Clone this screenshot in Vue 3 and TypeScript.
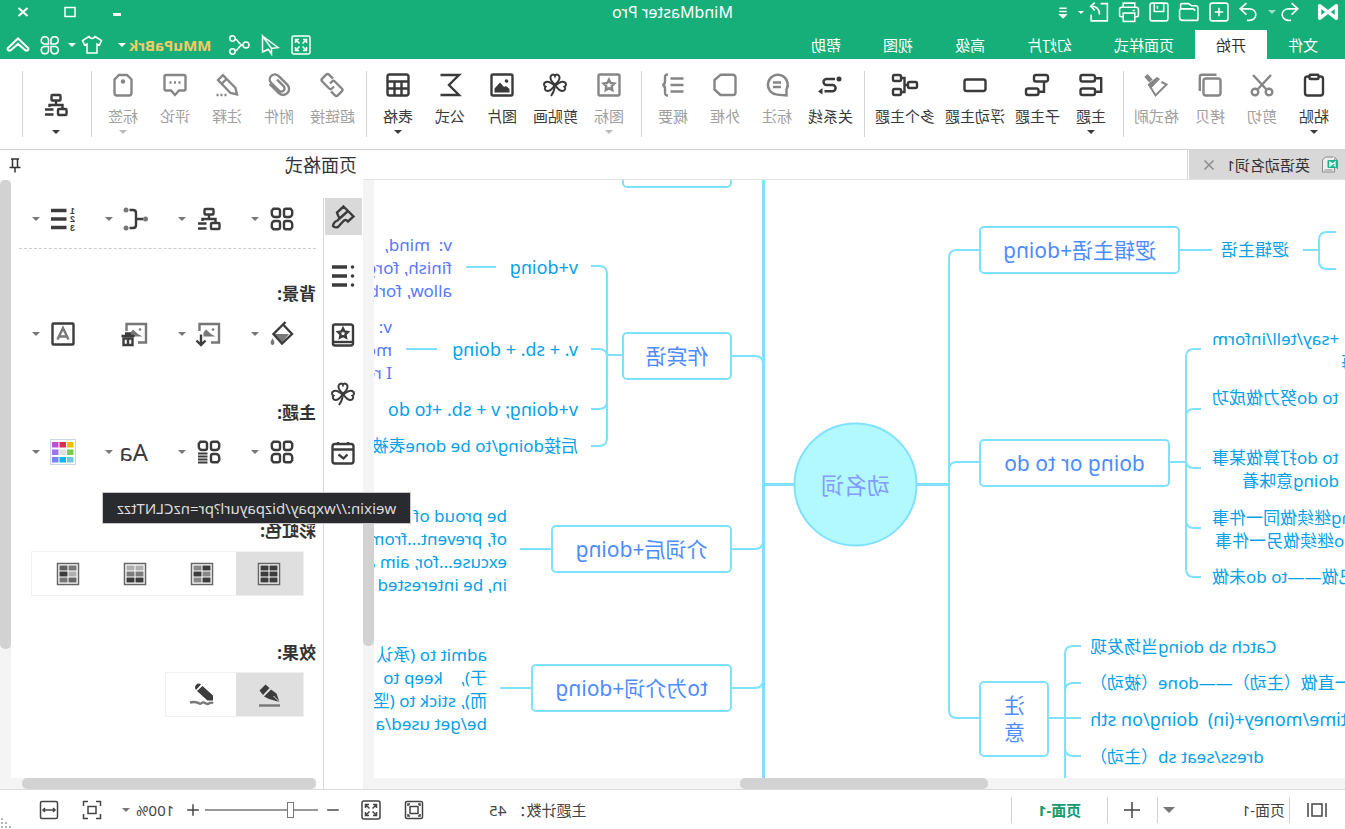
<script setup lang="ts">
import { ref } from 'vue'

interface Tool {
  icon: string
  label: string
  off?: boolean
  caret?: boolean
}

interface Topic {
  text: string[]
  y: number
  left?: number
  right?: number
  tone?: string
}

interface Box {
  text: string
  x: number
  y: number
  w: number
  h: number
  stacked?: boolean
}

const star = '<path d="M12 6.6l1.7 3.4 3.7.6-2.7 2.6.6 3.8-3.3-1.8-3.3 1.8.6-3.8-2.7-2.6 3.7-.6z"/>'
const clover =
  '<g stroke-width="2"><path d="M12 11.5C9 9 7 6.800 7.500 4 8 1.300 11 .8 12 3 13 .8 16 1.300 16.500 4 17 6.800 15 9 12 11.500z"/>' +
  '<path d="M11.500 12.500C8.500 9.800 5.500 8 2.900 9 .4 10 .4 12.800 2.500 13.700 .8 15.500 2.300 18.200 4.900 18 7.800 17.700 9.800 15.300 11.500 12.500z"/>' +
  '<path d="M12.500 12.500C15.500 9.800 18.500 8 21.100 9 23.600 10 23.600 12.800 21.500 13.700 23.200 15.500 21.700 18.200 19.100 18 16.200 17.700 14.200 15.300 12.500 12.500z"/>' +
  '<path d="M12 12.500c.5 4 1.600 7.500 4 10.500"/></g>'
const structure =
  '<rect x="7.500" y="2" width="9" height="5.500" rx="1"/><path d="M12 7.500V12M5.500 15.500V12H18.500V14"/>' +
  '<rect x="1.500" y="16" width="8.500" height="6" rx="1"/><path d="M14.500 16.500H23M14.500 21.500H23"/>'
const petals =
  '<path d="M3.500 1.800H8a2 2 0 0 1 2 2V8a2 2 0 0 1-2 2H5a3.200 3.200 0 0 1-3.200-3.200V3.800z"/>' +
  '<path d="M20.500 1.800H16a2 2 0 0 0-2 2V8a2 2 0 0 0 2 2h3a3.200 3.200 0 0 0 3.200-3.200V3.800z"/>' +
  '<path d="M3.500 22.200H8a2 2 0 0 0 2-2V16a2 2 0 0 0-2-2H5a3.200 3.200 0 0 0-3.200 3.200V20.200z"/>'
const picFrame =
  '<g stroke="#777"><path d="M10 20.500H2V2H21.500V9"/></g><circle cx="8" cy="7.500" r="1.300" fill="#777" stroke="none"/><path d="M5.500 14.500l4.500-2.500 5-4.500 2.500 3v4z" fill="#777" stroke="none"/>'
const shadeGrid = (c: string[]): string =>
  '<rect x="1.500" y="1.500" width="21" height="21" stroke="#666" stroke-width="1.500" fill="#fff"/>' +
  c
    .map(
      (f, i) =>
        `<rect x="${i % 2 ? 12.500 : 3.500}" y="${3.500 + Math.floor(i / 2) * 6}" width="8" height="5" fill="${f}" stroke="none"/>`,
    )
    .join('')

const icons: Record<string, string> = {
  logo: '<path d="M2.500 16.500V4.500L18.500 16.500V4.500z" stroke-width="3.200" stroke-linejoin="round"/>',
  undo: '<path d="M9 2L3 7.500l6 5.500M3.500 7.500h8.500a6 5.500 0 0 1 0 11H9.500"/>',
  redo: '<path d="M12 2l6 5.500-6 5.500M17.500 7.500H9a6 5.500 0 0 0 0 11h2.500"/>',
  create: '<rect x="2" y="2" width="17" height="17" rx="2"/><path d="M10.500 6.500v8M6.500 10.500h8"/>',
  open: '<path d="M2 18.500V6.500a2 2 0 0 1 2-2h4l3-2h6.500a1 1 0 0 1 1 1v3.500M2 18.500h14.500a3 3 0 0 0 3-3V9.500a2 2 0 0 0-2-2H7a2 2 0 0 0-2 2"/>',
  save: '<rect x="2" y="2" width="17" height="17" rx="2"/><path d="M6 2v8h9V2M12 4.500v3"/>',
  print: '<path d="M5 6V2h11v4M5 15H3a1.500 1.500 0 0 1-1.500-1.500V8A2 2 0 0 1 3.500 6h14a2 2 0 0 1 2 2v5.500A1.500 1.500 0 0 1 18 15h-2"/><rect x="5" y="11.500" width="11" height="8"/><path d="M5 9h2"/>',
  exportTo: '<path d="M9 2.500H2.500v16.500h15.500V13M10 13c0-4 2-8 8-8M14.500 1.500L18.500 5l-4 4"/>',
  more: '<path d="M7 7h7M7 10h7"/><path d="M6 12.500h9L10.500 17z" fill="currentColor" stroke="none"/>',
  full: '<rect x="2" y="2" width="18" height="18" rx="2"/><path d="M9 5.500H5.500V9M5.500 5.500L9.500 9.500M13 5.500h3.500V9M16.500 5.500l-4 4M9 16.500H5.500V13M5.500 16.500l4-4M13 16.500h3.500V13M16.500 16.500l-4-4"/>',
  plane: '<path d="M18.500 2L3 13.500l6.500 1L18.500 2v16l-6.500-3M9.500 14.500V20l3.500-5"/>',
  share: '<circle cx="4" cy="11" r="3"/><circle cx="17.500" cy="4.500" r="2.700"/><circle cx="17.500" cy="17.500" r="2.700"/><path d="M7 11c5 0 4-5 8-6M7 11c5 0 4 5 8 6"/>',
  shirt: '<path d="M8 2.500L1.500 6.500 3.500 11 6 10v9h10v-9l2.500 1 2-4.500L14 2.500c-1.500 2.500-4.500 2.500-6 0z"/>',
  petals4:
    '<path d="M10 10H5.500A3.700 3.700 0 1 1 10 5.500zM12.500 10H17a3.700 3.700 0 1 0-4.500-4.500zM10 12.500H5.500A3.700 3.700 0 1 0 10 17zM12.500 12.500H17a3.700 3.700 0 1 1-4.500 4.500z"/>',
  collapse: '<path d="M1.500 14L11 5l9.500 9q.5 2.500-2.500 2L11 10 4 16q-3 .5-2.500-2z" stroke-width="1.800"/>',
  paste: '<rect x="3" y="3.500" width="18" height="19" rx="2.500"/><rect x="7.500" y="1.800" width="9" height="4.200" rx="1" fill="#fff"/>',
  cut: '<circle cx="5" cy="19" r="3.300"/><circle cx="19" cy="19" r="3.300"/><path d="M3 2l13.500 14.500M21 2L7.500 16.500"/>',
  copy: '<rect x="1.500" y="5.500" width="17" height="17" rx="2.500"/><path d="M5.500 1.800H20a2.200 2.200 0 0 1 2.200 2.200V18"/>',
  brush: '<path d="M22 2.500L17 8" stroke-width="4.500"/><path d="M6.500 9L1.500 11.500 12.500 22.500 17 15" stroke-width="2"/><path d="M8.500 6l2.500-1.500L20 11.500l-2.500 4z" fill="currentColor" stroke-width="1"/>',
  topic: '<rect x="8" y="2" width="14.500" height="6.500" rx="2"/><rect x="8" y="15.500" width="14.500" height="6.500" rx="2"/><path d="M8 5.200H1.800V18.800H8"/>',
  subtopic: '<rect x="1" y="2" width="14" height="6.500" rx="2"/><rect x="10.500" y="15.500" width="12.500" height="6.500" rx="2"/><path d="M5 8.500V18.800H10"/>',
  floating: '<rect x="1.500" y="6.500" width="21" height="11.500" rx="2"/>',
  multi: '<rect x="16" y="2" width="8" height="6" rx="1.500"/><rect x="16" y="16" width="8" height="6" rx="1.500"/><rect x="0" y="9" width="9" height="6" rx="1.500"/><path d="M9 12h3.500M16 5h-3.500v14H16"/>',
  relation: '<circle cx="3" cy="6" r="2.500" fill="currentColor" stroke="none"/><path d="M7 6h8.500a3 3 0 0 1 0 6H9.500a3 3 0 0 0 0 6.200H17.500"/><path d="M19.500 15v6.500l4.500-3z" fill="currentColor" stroke="none"/>',
  callout: '<path d="M2.500 16.500A9.900 9.900 0 1 1 12 21.600L2.500 22.500z"/><path d="M8 9.500h8M8 14h8"/>',
  boundary: '<path d="M4 1.800H16.500L22.500 7V16.500L16.500 22H4a2.500 2.500 0 0 1-2.500-2.500V4.300A2.500 2.500 0 0 1 4 1.800z" stroke-linejoin="round"/>',
  summary: '<path d="M1.500 5.500h13M1.500 12h13M1.500 18.500h13"/><path d="M17 1.500c3 0 3 1 3 3v4c0 2 .5 3 2.500 3.500-2 .5-2.500 1.500-2.500 3.500v4c0 2 0 3-3 3"/>',
  mark: '<rect x="1.500" y="1.500" width="21" height="21" rx="1.500"/>' + star,
  clipart: clover,
  image: '<rect x="1.500" y="1.500" width="21" height="21" rx="1.500"/><circle cx="7.500" cy="8" r="1.800" fill="currentColor" stroke="none"/><path d="M4.500 19.500v-3.500l3.500-3 2 1 4-4.500 5.500 6v4z" fill="currentColor" stroke="none"/>',
  formula: '<path d="M21.500 2H3L13 12 3 22H21.500"/>',
  table: '<rect x="1.500" y="1.500" width="21" height="21" rx="2"/><path d="M2 8.500H22M2 15.500H22M8.500 8.500V22M15.500 8.500V22"/>',
  link: '<path d="M10 13.500l2 2a2 2 0 0 0 2.800 0l7-7a2 2 0 0 0 0-2.800l-4-4a2 2 0 0 0-2.800 0l-4 4M14 10.500l-2-2a2 2 0 0 0-2.800 0l-7 7a2 2 0 0 0 0 2.800l4 4a2 2 0 0 0 2.800 0l4-4"/>',
  attach: '<path d="M21.400 11l-9.200 9.200a6 6 0 0 1-8.500-8.500l8.600-8.500A5 5 0 0 1 20 9.900l-8 7.800a3.200 3.200 0 0 1-4.600-4.600l6.600-6.500"/>',
  note: '<path d="M2 21.500L3.500 15 16 2.200 21 7 8.500 20zM12.500 6l5 5"/><path d="M12.500 22h2M16.500 22h2M20.500 22h2"/>',
  comment: '<path d="M3 2H21a1.500 1.500 0 0 1 1.500 1.500V16A1.500 1.500 0 0 1 21 17.500h-5L12 22 8 17.500H3A1.500 1.500 0 0 1 1.500 16V3.500A1.500 1.500 0 0 1 3 2z"/><path d="M6.500 9.500h2M11 9.500h2M15.500 9.500h2"/>',
  tag: '<path d="M8 2h8l4.500 4.500V20A2.500 2.500 0 0 1 18 22.500H6A2.500 2.500 0 0 1 3.500 20V6.500z"/><circle cx="12" cy="8.500" r="2.200" fill="currentColor"  stroke="none"/>',
  structure,
  layout: petals + '<path d="M20.500 22.200H16a2 2 0 0 1-2-2V16a2 2 0 0 1 2-2h3a3.200 3.200 0 0 1 3.200 3.200V20.200z"/>',
  themeList: petals + '<path d="M13.500 13.500H23M13.500 16.500H23M13.500 19.500H23M13.500 22.500H23" stroke-width="1.800"/>',
  branch: '<circle cx="2.500" cy="12" r="2.500" fill="#777" stroke="none"/><circle cx="22" cy="3" r="2.500" fill="#777" stroke="none"/><circle cx="22" cy="21" r="2.500" fill="#777" stroke="none"/><path d="M5 12h7M18.500 3h-3.500q-3 0-3 3v12q0 3 3 3h3.500"/>',
  numbering: '<path d="M8.500 3.500H24M8.500 12H24M8.500 20.500H24" stroke-width="3.500"/><g fill="currentColor" stroke="none" font-family="Liberation Sans, sans-serif" font-weight="bold" font-size="9"><text x="0" y="6.500">1</text><text x="0" y="15">2</text><text x="0" y="24">3</text></g>',
  fill: '<path d="M5 12h15l-8 8.500z" fill="#777" stroke="none"/><path d="M8.500 0L20.500 12 12 21.500 2 12 11 2.500"/><path d="M21.500 16.500c4 5 .5 6.500 0 6.500s-4-1.500 0-6.500z" fill="#777" stroke="none"/>',
  bgPick: picFrame + '<path d="M20 12.500v10M15.500 18.500l4.500 4.500 4.500-4.500"/>',
  bgClear: picFrame + '<path d="M13.500 14h13M17 11.500h6"/><path d="M15.500 16.500h9v6.500h-9z"/><path d="M20 16v7"/>',
  watermark: '<rect x="1.500" y="1.500" width="21" height="21" rx="1"/><path d="M6.500 17.500L12 6l5.500 11.500M8.500 14.500h7" stroke="#777"/>',
  palette:
    '<rect x="-.5" y="-.5" width="25" height="25" fill="#fff" stroke="#ccd4ea" stroke-width="1"/>' +
    ['#f0c000', '#dd2c50', '#c24fcb', '#75d043', '#ddd', '#9b75ee', '#68cbe0', '#00b5f2', '#7583ff']
      .map((c, i) => `<rect x="${1.500 + (i % 3) * 7.500}" y="${2 + Math.floor(i / 3) * 7.500}" width="6.500" height="5.500" fill="${c}" stroke="none"/>`)
      .join(''),
  style: '<path d="M11.500 1.500L1.500 11.500 7 16.500Q9.500 13.500 12 16.500L17 22q3.500 1 5-1-.5-4-4.500-5.500-3-2-.5-5L18 7.500z"/><path d="M7 6l9 8"/>',
  outline: '<path d="M8 3H23M8 12H23M8 21H23" stroke-width="3.500"/><circle cx="2.500" cy="3" r="1.800" fill="currentColor" stroke="none"/><circle cx="2.500" cy="12" r="1.800" fill="currentColor" stroke="none"/><circle cx="2.500" cy="21" r="1.800" fill="currentColor" stroke="none"/>',
  book: '<rect x="2" y="1.500" width="20" height="21" rx="2"/><path d="M2 19H22"/><path d="M12 5.500l1.500 3 3.300.5-2.400 2.300.6 3.300-3-1.600-3 1.600.6-3.300L7.200 9l3.300-.5z"/>',
  calendar: '<rect x="1.500" y="3" width="21" height="19.500" rx="2.500"/><path d="M2 8.500H22M7 1v3M17 1v3M7.500 13.500l4 4 5-4"/>',
  rainbow1: shadeGrid(['#3c3c3c', '#3c3c3c', '#3c3c3c', '#3c3c3c', '#3c3c3c', '#3c3c3c']),
  rainbow2: shadeGrid(['#3c3c3c', '#888', '#888', '#3c3c3c', '#3c3c3c', '#888']),
  rainbow3: shadeGrid(['#b0b0b0', '#b0b0b0', '#7c7c7c', '#7c7c7c', '#3c3c3c', '#3c3c3c']),
  rainbow4: shadeGrid(['#777', '#606060', '#b0b0b0', '#3c3c3c', '#666', '#777']),
  pen: '<path d="M1 22.500H22" stroke="#777"/><path d="M1.500 19L4.500 10.500 10 6.500l7 7L12 16z M11.500 5L15.500 1.500 21.500 7.500 18 12z" fill="currentColor" stroke="none"/><path d="M1.500 19L7.500 13" stroke="#ddd" stroke-width="1"/>',
  pencil: '<path d="M1 20.500c3-3 4 2 7 0s3.500-1 5 0 2-.5 4-1 3-1 7 0" stroke="#777"/><path d="M1 17.500V12.500L11.500 3l5.500 5L6.500 17.500zM13 1.500q2.500-2 5 .5 2 2.500 0 5z" fill="currentColor" stroke="none"/>',
  pin: '<path d="M6 4h8M7.500 4v8M12.500 4v8M4.500 12.500h11M10 12v5.500"/>',
  pages: '<rect x="6" y="4" width="10" height="12"/><path d="M2 3v14M20 3v14"/>',
  plus: '<path d="M11 3v16M3 11h16"/>',
  minus: '<path d="M3 11h16"/>',
  fitPage: '<rect x="2.500" y="2.500" width="17" height="17" rx="1.500"/><rect x="7" y="7.500" width="8" height="7"/><path d="M5 7V5h2M15 5h2v2M5 15v2h2M15 17h2v-2"/>',
  fitSel: '<path d="M2.500 7V2.500H7M15 2.500h4.500V7M2.500 15v4.500H7M15 19.500h4.500V15"/><rect x="7" y="7.500" width="8" height="7"/>',
  fitWidth: '<rect x="2.500" y="2.500" width="17" height="17" rx="1.500"/><path d="M5.500 11h11M7 9l-2 2 2 2M15 9l2 2-2 2"/>',
}

const quick: [string, string][] = [
  ['create', '新建'],
  ['open', '打开'],
  ['save', '保存'],
  ['print', '打印'],
  ['exportTo', '导出'],
]

const menu: string[] = ['文件', '开始', '页面样式', '幻灯片', '高级', '视图', '帮助']
const activeMenu = ref('开始')

const groups: Tool[][] = [
  [
    { icon: 'paste', label: '粘贴', caret: true },
    { icon: 'cut', label: '剪切', off: true },
    { icon: 'copy', label: '拷贝', off: true },
    { icon: 'brush', label: '格式刷', off: true },
  ],
  [
    { icon: 'topic', label: '主题', caret: true },
    { icon: 'subtopic', label: '子主题' },
    { icon: 'floating', label: '浮动主题' },
    { icon: 'multi', label: '多个主题' },
  ],
  [
    { icon: 'relation', label: '关系线' },
    { icon: 'callout', label: '标注', off: true },
    { icon: 'boundary', label: '外框', off: true },
    { icon: 'summary', label: '概要', off: true },
  ],
  [
    { icon: 'mark', label: '图标', off: true, caret: true },
    { icon: 'clipart', label: '剪贴画' },
    { icon: 'image', label: '图片' },
    { icon: 'formula', label: '公式' },
    { icon: 'table', label: '表格', caret: true },
  ],
  [
    { icon: 'link', label: '超链接', off: true },
    { icon: 'attach', label: '附件', off: true },
    { icon: 'note', label: '注释', off: true },
    { icon: 'comment', label: '评论', off: true },
    { icon: 'tag', label: '标签', off: true, caret: true },
  ],
]

const boxes: Box[] = [
  { text: '逻辑主语+doing', x: 165, y: 46, w: 201, h: 48 },
  { text: 'doing or to do', x: 175, y: 259, w: 191, h: 48 },
  { text: '注意', x: 296, y: 501, w: 70, h: 76, stacked: true },
  { text: '', x: 613, y: -40, w: 110, h: 48 },
  { text: '作宾语', x: 613, y: 152, w: 110, h: 48 },
  { text: '介词后+doing', x: 613, y: 345, w: 181, h: 48 },
  { text: 'to为介词+doing', x: 613, y: 484, w: 201, h: 48 },
]

// y is the middle of the text block; left-hand topics are anchored by their right edge
const topics: Topic[] = [
  { text: ['逻辑主语'], y: 70, right: 124 },
  { text: ['+say/tell/inform'], y: 159, right: 133 },
  { text: ['每'], y: 182, right: 4 },
  { text: ['to do努力做成功'], y: 218, right: 133 },
  { text: ['to do打算做某事'], y: 278, right: 133 },
  { text: ['doing意味着'], y: 301, right: 103 },
  { text: ['doing继续做同一件事'], y: 338, right: 133 },
  { text: ['to do继续做另一件事'], y: 361, right: 130 },
  { text: ['已做——to do未做'], y: 397, right: 133 },
  { text: ['Catch sb doing当场发现'], y: 467, right: 255 },
  { text: ['一直做（主动）——done（被动）'], y: 503, right: 255 },
  { text: ['time/money+(in)  doing/on sth'], y: 540, right: 255, tone: 'large' },
  { text: ['dress/seat sb（主动）'], y: 577, right: 255 },
  { text: ['v+doing'], y: 88, left: 767, tone: 'large' },
  { text: ['v. + sb. + doing'], y: 170, left: 767, tone: 'large' },
  { text: ['v+doing; v + sb. +to do'], y: 230, left: 767, tone: 'large' },
  { text: ['后接doing/to be done表被动'], y: 266, left: 767 },
  { text: ['v:  mind,', 'finish, forget', 'allow, forbid'], y: 88, left: 893, tone: 'deep' },
  { text: ['v:', 'mean', 'I regret'], y: 170, left: 953, tone: 'deep' },
  { text: ['be proud of', 'of, prevent...from', 'excuse...for, aim at', 'in, be interested'], y: 370, left: 838 },
  { text: ['admit to (承认', '于),    keep to', '而), stick to (坚', 'be/get used/a'], y: 509, left: 858 },
]

const topicStyle = (t: Topic): Record<string, string> => ({
  top: `${Math.floor(t.y - (t.text.length * 23) / 2)}px`,
  ...(t.left !== undefined ? { left: `${t.left}px` } : { left: `${(t.right ?? 0) - 400}px`, width: '400px', textAlign: 'right' }),
})

const links: string[] = [
  'M366 70H388Q396 70 396 78V530Q396 538 388 538H366M366 282H388Q396 282 396 290',
  'M165 70H133M42 70H26M9 52H18Q26 52 26 60V81Q26 89 18 89H9',
  'M175 282H159M144 169H151Q159 169 159 177V389Q159 397 151 397H144M144 229H151Q159 229 159 237M144 288H151Q159 288 159 280M144 348H151Q159 348 159 340',
  'M296 538H264M264 466H272Q280 466 280 474V598M264 503H272Q280 503 280 511M264 576H272Q280 576 280 568',
  'M613 176H590Q582 176 582 184M613 369H590Q582 369 582 361M613 508H590Q582 508 582 500',
  'M723 175H738M754 86H746Q738 86 738 94V258Q738 266 746 266H754M754 169H746Q738 169 738 177M754 229H746Q738 229 738 221',
  'M849 87H879M908 169H939M794 369H825M814 508H845',
]

const sideTabs: [string, string][] = [
  ['style', '页面格式'],
  ['outline', '大纲'],
  ['book', '图标库'],
  ['clipart', '剪贴画'],
  ['calendar', '任务'],
]

const rainbow = ref(0)
const effect = ref(0)
const zoom = ref(23)
</script>

<template>
  <div class="app">
    <header class="head">
      <div class="title-row">
        <svg class="i22 logo" viewBox="0 0 21 21" v-html="icons.logo"></svg>
        <button class="qb undo" aria-label="撤销"><svg class="i22" viewBox="0 0 21 21" v-html="icons.undo"></svg></button>
        <i class="caret dim"></i>
        <button class="qb redo" aria-label="重做"><svg class="i22" viewBox="0 0 21 21" v-html="icons.redo"></svg></button>
        <button v-for="q in quick" :key="q[0]" class="qb" :aria-label="q[1]">
          <svg class="i22" viewBox="0 0 21 21" v-html="icons[q[0]]"></svg>
        </button>
        <i class="caret after"></i>
        <button class="qb more" aria-label="更多"><svg class="i22" viewBox="0 0 21 21" v-html="icons.more"></svg></button>
        <h1>MindMaster Pro</h1>
        <div class="win">
          <button aria-label="最小化"><svg viewBox="0 0 12 12"><path d="M2 8.500h8" stroke-width="3" /></svg></button>
          <button aria-label="最大化"><svg viewBox="0 0 12 12"><path d="M1 1.500h10v9H1z" stroke-width="1.500" /></svg></button>
          <button aria-label="关闭"><svg viewBox="0 0 12 12"><path d="M1.500 2l9 8M10.500 2l-9 8" stroke-width="2" /></svg></button>
        </div>
      </div>
      <div class="menu-row">
        <nav class="menu">
          <button v-for="m in menu" :key="m" :class="{ on: m === activeMenu }" @click="activeMenu = m">{{ m }}</button>
        </nav>
        <div class="account">
          <button class="ab" aria-label="全屏"><svg class="i22" viewBox="0 0 22 22" v-html="icons.full"></svg></button>
          <button class="ab" aria-label="发送"><svg class="i22" viewBox="0 0 22 22" v-html="icons.plane"></svg></button>
          <button class="ab" aria-label="分享"><svg class="i22" viewBox="0 0 22 22" v-html="icons.share"></svg></button>
          <button class="user">MMuPaBrk<i class="caret"></i></button>
          <button class="ab skin" aria-label="皮肤"><svg class="i22" viewBox="0 0 22 22" v-html="icons.shirt"></svg><i class="caret"></i></button>
          <button class="ab" aria-label="应用"><svg class="i22" viewBox="0 0 22 22" v-html="icons.petals4"></svg></button>
          <button class="ab" aria-label="收起"><svg class="i24" viewBox="0 0 22 22" v-html="icons.collapse"></svg></button>
        </div>
      </div>
    </header>

    <div class="ribbon">
      <div v-for="(g, gi) in groups" :key="gi" class="group">
        <button v-for="t in g" :key="t.label" class="tool" :class="[{ off: t.off }, 'n' + t.label.length]" :disabled="t.off">
          <svg class="i24" viewBox="0 0 24 24" v-html="icons[t.icon]"></svg>
          <span>{{ t.label }}</span>
          <i v-if="t.caret" class="caret"></i>
        </button>
      </div>
      <div class="group">
        <button class="tool lone" aria-label="布局">
          <svg class="i24" viewBox="0 0 24 24" v-html="icons.structure"></svg>
          <i class="caret"></i>
        </button>
      </div>
    </div>

    <main class="work">
      <section class="doc">
        <div class="doc-tabs">
          <div class="doc-tab">
            <svg class="doc-icon" viewBox="0 0 17 18">
              <path d="M5 1H13L16 4V16H4V3" fill="#eee" stroke="#888" />
              <path d="M1 13V4.500L4 1M6 14h8" fill="none" stroke="#888" />
              <rect x="1" y="4" width="10" height="8" rx="1" fill="#14b889" stroke="none" />
              <path d="M3.500 10V6L8.500 10V6z" fill="none" stroke="#fff" stroke-width="1.300" />
            </svg>
            <span>英语动名词1</span>
            <button aria-label="关闭文档"><svg viewBox="0 0 12 12"><path d="M1.500 1.500l9 9M10.500 1.500l-9 9" /></svg></button>
          </div>
        </div>
        <div class="view">
          <div class="canvas">
            <svg class="wires" width="971" height="598" viewBox="0 0 971 598">
              <path v-for="(d, i) in links" :key="i" :d="d" />
              <path class="thick" d="M396 304.500H428M551 304.500H582M581.500 0V598" />
              <circle cx="489.500" cy="304.500" r="61" />
            </svg>
            <div class="root-topic">动名词</div>
            <div
              v-for="(b, i) in boxes"
              :key="i"
              class="box"
              :class="{ stacked: b.stacked }"
              :style="{ left: b.x + 'px', top: b.y + 'px', width: b.w + 'px', height: b.h + 'px' }"
            >
              {{ b.text }}
            </div>
            <div v-for="(t, i) in topics" :key="'t' + i" class="topic" :class="t.tone" :style="topicStyle(t)">
              <div v-for="(l, j) in t.text" :key="j">{{ l }}</div>
            </div>
          </div>
          <div class="bar v"><div class="space"></div><div class="thumb"></div><div class="rest"></div></div>
        </div>
        <div class="bar h"><div class="thumb"></div></div>
      </section>

      <aside class="panel">
        <div class="panel-title">
          <h2>页面格式</h2>
          <button aria-label="固定"><svg viewBox="0 0 20 20" v-html="icons.pin"></svg></button>
        </div>
        <div class="panel-body">
          <div class="side">
            <button v-for="(s, i) in sideTabs" :key="s[0]" :class="{ on: i === 0 }" :aria-label="s[1]">
              <svg class="i24" viewBox="0 0 24 24" v-html="icons[s[0]]"></svg>
            </button>
          </div>
          <div class="sheet">
            <div class="form">
              <div class="row first">
                <button aria-label="布局"><svg class="i24" viewBox="0 0 24 24" v-html="icons.layout"></svg><i class="caret"></i></button>
                <button aria-label="结构"><svg class="i24" viewBox="0 0 24 24" v-html="icons.structure"></svg><i class="caret"></i></button>
                <button aria-label="连线"><svg class="i24" viewBox="0 0 24 24" v-html="icons.branch"></svg><i class="caret"></i></button>
                <button aria-label="编号"><svg class="i24" viewBox="0 0 24 24" v-html="icons.numbering"></svg><i class="caret"></i></button>
              </div>
              <h3 class="bg-head">背景:</h3>
              <div class="row">
                <button aria-label="填充"><svg class="i24" viewBox="0 0 24 24" v-html="icons.fill"></svg><i class="caret"></i></button>
                <button aria-label="背景图片"><svg class="i24" viewBox="0 0 24 24" v-html="icons.bgPick"></svg><i class="caret"></i></button>
                <button aria-label="删除背景"><svg class="i24" viewBox="0 0 24 24" v-html="icons.bgClear"></svg></button>
                <button aria-label="水印"><svg class="i24" viewBox="0 0 24 24" v-html="icons.watermark"></svg><i class="caret"></i></button>
              </div>
              <h3>主题:</h3>
              <div class="row">
                <button aria-label="主题样式"><svg class="i24" viewBox="0 0 24 24" v-html="icons.layout"></svg><i class="caret"></i></button>
                <button aria-label="主题列表"><svg class="i24" viewBox="0 0 24 24" v-html="icons.themeList"></svg><i class="caret"></i></button>
                <button class="aa">Aa<i class="caret"></i></button>
                <button aria-label="颜色"><svg class="i24" viewBox="0 0 24 24" v-html="icons.palette"></svg><i class="caret"></i></button>
              </div>
              <h3>彩虹色:</h3>
              <div class="seg">
                <button v-for="n in 4" :key="n" :class="{ on: rainbow === n - 1 }" :aria-label="'彩虹色' + n" @click="rainbow = n - 1">
                  <svg class="i24" viewBox="0 0 24 24" v-html="icons['rainbow' + n]"></svg>
                </button>
              </div>
              <h3 class="fx-head">效果:</h3>
              <div class="seg">
                <button :class="{ on: effect === 0 }" aria-label="直线" @click="effect = 0"><svg class="i24" viewBox="0 0 24 24" v-html="icons.pen"></svg></button>
                <button :class="{ on: effect === 1 }" aria-label="手绘" @click="effect = 1"><svg class="i24" viewBox="0 0 24 24" v-html="icons.pencil"></svg></button>
              </div>
            </div>
            <div class="bar h"><div class="thumb"></div></div>
          </div>
          <div class="bar v"><div class="thumb"></div></div>
        </div>
        <div class="tip" role="tooltip">weixin://wxpay/bizpayurl?pr=nzCLNTtzz</div>
      </aside>
    </main>

    <footer class="status">
      <button class="pages" aria-label="页面列表"><svg class="i22" viewBox="0 0 22 20" v-html="icons.pages"></svg></button>
      <div class="picker">
        <select aria-label="页面"><option>页面-1</option></select>
        <i class="caret big"></i>
      </div>
      <button class="add" aria-label="添加页面"><svg class="i22" viewBox="0 0 22 22" v-html="icons.plus"></svg></button>
      <button class="page">页面-1</button>
      <div class="count">主题计数：<span>45</span></div>
      <div class="zoom">
        <button class="zi" aria-label="适应页面"><svg class="i22" viewBox="0 0 22 22" v-html="icons.fitPage"></svg></button>
        <button class="zi" aria-label="全屏显示"><svg class="i22" viewBox="0 0 22 22" v-html="icons.full"></svg></button>
        <button class="step out" aria-label="缩小"><svg viewBox="0 0 22 22" v-html="icons.minus"></svg></button>
        <input v-model="zoom" type="range" min="0" max="100" aria-label="缩放" />
        <button class="step" aria-label="放大"><svg viewBox="0 0 22 22" v-html="icons.plus"></svg></button>
        <button class="pct">100%<i class="caret"></i></button>
        <button class="zi" aria-label="适应选择"><svg class="i22" viewBox="0 0 22 22" v-html="icons.fitSel"></svg></button>
        <button class="zi" aria-label="适应宽度"><svg class="i22" viewBox="0 0 22 22" v-html="icons.fitWidth"></svg></button>
      </div>
      <svg class="grip" viewBox="0 0 12 12"><path d="M10 1v2M10 5v2M6 5v2M10 9v2M6 9v2M2 9v2" /></svg>
    </footer>
  </div>
</template>

<style>
body {
  margin: 0;
  overflow: hidden;
}
</style>

<style scoped>
/* The whole interface is shown as a mirror image. */
.app {
  transform: scaleX(-1);
  display: flex;
  flex-direction: column;
  height: 100vh;
  background: #fff;
  color: #333;
  font-family: 'Noto Sans', 'Noto Sans CJK SC', sans-serif;
  font-size: 15px;
  line-height: 20px;
}
.app *,
.app *::before {
  box-sizing: border-box;
}
button,
select {
  border: 0;
  padding: 0;
  margin: 0;
  background: none;
  color: inherit;
  font: inherit;
  display: flex;
  align-items: center;
  justify-content: center;
}
h1,
h2,
h3 {
  margin: 0;
}
svg {
  display: block;
  flex: none;
  overflow: visible;
  fill: none;
  stroke: currentColor;
  stroke-width: 2;
}
.i22 {
  width: 22px;
  height: 22px;
  stroke-width: 1.5;
}
.i24 {
  width: 24px;
  height: 24px;
  stroke-width: 2.4;
}
.caret {
  flex: none;
  width: 0;
  height: 0;
  border: 4px solid transparent;
  border-top-color: currentColor;
  border-bottom: 0;
}

.head {
  background: #16ae79;
  color: #fff;
}
.title-row {
  position: relative;
  display: flex;
  align-items: center;
  height: 24px;
  padding-left: 6px;
}
.logo {
  margin-right: 16px;
}
.qb {
  width: 30px;
  height: 22px;
}
.qb.undo,
.qb.redo {
  width: 22px;
}
.qb.redo {
  margin: 0 3px 0 9px;
}
.caret.dim {
  margin-left: 3px;
  opacity: 0.6;
}
.caret.after {
  border-width: 3px;
  border-bottom: 0;
}
.qb.more {
  margin-left: 4px;
  width: 22px;
}
h1 {
  position: absolute;
  left: 0;
  right: 0;
  text-align: center;
  pointer-events: none;
  font-size: 16px;
  font-weight: 400;
}
.win {
  display: flex;
  margin-left: auto;
}
.win button {
  width: 47px;
}
.win svg {
  width: 12px;
  height: 12px;
}
.menu-row {
  display: flex;
  justify-content: space-between;
  padding: 6px 6px 0;
}
.menu {
  display: flex;
}
.menu button {
  height: 29px;
  padding: 0 21px;
}
.menu .on {
  background: #fff;
  color: #333;
}
.account {
  display: flex;
  align-items: center;
  height: 29px;
  gap: 9px;
}
.user {
  gap: 3px;
  color: #f7ca64;
  font-weight: 700;
  margin: 0 6px 0 8px;
}
.user .caret,
.skin .caret {
  border-top-color: #fff;
}
.skin {
  gap: 5px;
  margin-right: -2px;
}

.ribbon {
  display: flex;
  height: 91px;
  padding: 12px 0 12px 5px;
  border-bottom: 1px solid #d0d0d0;
}
.group {
  display: flex;
}
.group::after {
  content: '';
  width: 1px;
  margin: 0 6px 0 5px;
  background: #d4d4d4;
}
.tool {
  width: 52px;
  flex-direction: column;
  justify-content: flex-start;
  padding-top: 2px;
  color: #3a3a3a;
  white-space: nowrap;
}
.tool span {
  margin-top: 9px;
  height: 20px;
}
.tool .caret {
  margin-top: 4px;
}
.tool.n3 {
  width: 55px;
}
.tool.n4 {
  width: 70px;
}
.tool.off {
  color: #868686;
}
.off span {
  color: #a0a0a0;
}
.off .caret {
  border-top-color: #bbb;
}
.tool.lone {
  width: 57px;
  padding-top: 22px;
}
.lone .caret {
  margin-top: 13px;
}

.work {
  flex: 1;
  display: flex;
  min-height: 0;
}
.doc {
  flex: 1;
  display: flex;
  flex-direction: column;
  min-width: 0;
}
.doc-tabs {
  display: flex;
  height: 30px;
  border-bottom: 1px solid #e2e2e2;
}
.doc-tab {
  display: flex;
  align-items: center;
  gap: 11px;
  width: 158px;
  padding-left: 6px;
  background: linear-gradient(#d8d8d8, #d8d8d8) no-repeat 0 0 / 156px 100%;
  border-right: 1px solid #d8d8d8;
}
.doc-icon {
  width: 18px;
  height: 18px;
  stroke-width: 1;
}
.doc-tab button {
  color: #8c8c8c;
}
.doc-tab button svg {
  width: 12px;
  height: 12px;
  stroke-width: 1.5;
}
.view {
  flex: 1;
  display: flex;
  min-height: 0;
}
.canvas {
  position: relative;
  flex: 1;
  overflow: hidden;
}
.wires {
  position: absolute;
  left: 0;
  top: 0;
  stroke: #80e1ff;
}
.wires .thick {
  stroke-width: 3;
}
.wires circle {
  fill: #b2f8ff;
}
.root-topic {
  position: absolute;
  left: 428px;
  top: 287px;
  width: 123px;
  text-align: center;
  font-size: 23px;
  line-height: 36px;
  color: #859cff;
}
.box {
  position: absolute;
  display: flex;
  align-items: center;
  justify-content: center;
  border: 2px solid #80e1ff;
  border-radius: 5px;
  background: #fff;
  color: #4d8cff;
  font-size: 21px;
  line-height: 27px;
  white-space: nowrap;
}
.box.stacked {
  padding: 0 22px;
  white-space: normal;
}
.topic {
  position: absolute;
  white-space: pre;
  font-size: 17px;
  line-height: 23px;
  color: #05a1e8;
}
.topic.large {
  font-size: 18px;
}
.topic.deep {
  color: #5878ff;
}
.bar {
  flex: none;
  display: flex;
  background: #f4f4f4;
}
.bar.h {
  height: 11px;
}
.bar.v {
  width: 11px;
  flex-direction: column;
}
.thumb {
  border-radius: 5px;
  background: #d2d2d2;
}
.doc .h .thumb {
  width: 248px;
  margin-left: 357px;
}
.doc .v .space {
  flex: 320;
}
.doc .v .thumb {
  flex: 146;
}
.doc .v .rest {
  flex: 132;
}

.panel {
  position: relative;
  width: 363px;
  display: flex;
  flex-direction: column;
}
.panel-title {
  display: flex;
  align-items: center;
  justify-content: space-between;
  height: 30px;
  padding: 0 5px 0 6px;
}
.panel-title svg {
  width: 20px;
  height: 20px;
  stroke-width: 1.5;
}
h2 {
  font-size: 18px;
  font-weight: 400;
}
.panel-body {
  flex: 1;
  display: flex;
  min-height: 0;
}
.side {
  display: flex;
  flex-direction: column;
  gap: 22px;
  width: 40px;
  margin-top: 18px;
  padding-left: 1px;
  border-right: 1px solid #d8d8d8;
}
.side button {
  width: 37px;
  height: 37px;
  color: #3c3c3c;
}
.side .on {
  background: #d9d9d9;
}
.sheet {
  flex: 1;
  display: flex;
  flex-direction: column;
  min-width: 0;
}
.form {
  flex: 1;
  padding: 20px 8px 0 7px;
}
.sheet .h {
  margin-left: 7px;
}
.sheet .h .thumb {
  width: 294px;
}
.panel-body > .v .thumb {
  height: 469px;
}
.row {
  display: grid;
  grid-template-columns: repeat(4, 73px);
  padding-left: 22px;
  height: 38px;
}
.row button {
  justify-content: flex-start;
  gap: 11px;
  color: #3c3c3c;
}
.row .caret {
  border-top-color: #777;
}
.row.first {
  height: 49px;
  padding-bottom: 11px;
  border-bottom: 1px dashed #ccc;
}
.row .aa {
  font-size: 24px;
  gap: 6px;
}
h3 {
  font-size: 17px;
  line-height: 24px;
  padding-top: 48px;
  height: 80px;
}
.bg-head {
  padding-top: 33px;
  height: 66px;
}
.fx-head {
  padding-top: 45px;
  height: 76px;
}
.seg {
  display: flex;
  width: fit-content;
  margin-left: 12px;
  padding-right: 3px;
  border: 1px solid #f0f0f0;
}
.seg button {
  width: 67px;
  height: 43px;
  color: #3c3c3c;
}
.seg .on {
  background: #dfdfdf;
}
.tip {
  position: absolute;
  right: 102px;
  top: 342px;
  padding: 5px 14px;
  border: 1px solid #c8c8c8;
  background: #2a2b2f;
  color: #ddd;
  white-space: nowrap;
}

.status {
  display: flex;
  align-items: center;
  height: 40px;
  border-top: 1px solid #dcdcdc;
  color: #444;
}
.status button,
.picker {
  height: 26px;
}
.status .pages {
  width: 56px;
  border-right: 1px solid #d0d0d0;
}
.picker {
  display: flex;
  align-items: center;
  width: 132px;
  padding-right: 5px;
  border-right: 1px solid #d0d0d0;
}
select {
  flex: 1;
  appearance: none;
  padding-left: 4px;
}
.big {
  border-width: 6px;
  border-bottom: 0;
  color: #777;
}
.status .add {
  width: 50px;
  border-right: 1px solid #d0d0d0;
}
.status .page {
  width: 96px;
  border-right: 1px solid #d0d0d0;
  color: #129b6c;
  font-weight: 700;
}
.count {
  margin-left: auto;
}
.count span {
  margin-left: 5px;
}
.zoom {
  display: flex;
  align-items: center;
  margin-left: 54px;
}
.zi {
  width: 43px;
}
.step {
  width: 22px;
}
.step.out {
  margin-left: 5px;
}
.step svg {
  width: 16px;
  height: 16px;
}
.zoom input {
  appearance: none;
  width: 113px;
  height: 18px;
  margin: 0 1px 0 4px;
  background: linear-gradient(#999, #999) no-repeat center / 100% 2px;
}
.zoom input::-webkit-slider-thumb {
  appearance: none;
  width: 7px;
  height: 16px;
  border: 1px solid #777;
  background: #fff;
}
.pct {
  gap: 6px;
  margin: 0 8px;
}
.pct .caret {
  border-top-color: #777;
}
.grip {
  width: 12px;
  height: 12px;
  align-self: flex-end;
  margin-left: 16px;
  color: #b5b5b5;
}
</style>
